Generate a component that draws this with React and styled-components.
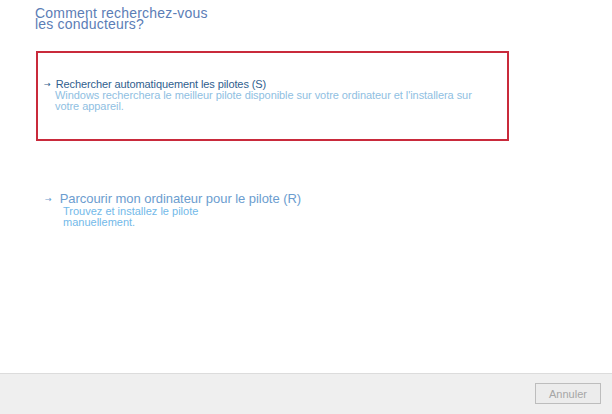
import React from "react";
import styled, { createGlobalStyle } from "styled-components";

const Global = createGlobalStyle`
  html, body { margin: 0; padding: 0; background: #ffffff; }
  body { font-family: "Liberation Sans", Arial, sans-serif; }
  #root { height: 414px; }
`;

const Page = styled.div`
  height: 414px;
  width: 612px;
  display: flex;
  flex-direction: column;
  background: #ffffff;
  overflow: hidden;
`;

const Content = styled.div`
  flex: 1;
  display: flex;
  flex-direction: column;
  padding: 7px 0 0 35px;
`;

const Title = styled.h1`
  margin: 0;
  font-size: 14px;
  letter-spacing: 0.2px;
  font-weight: normal;
  line-height: 11px;
  color: #5b7db6;
  padding-top: 1px;
`;

const Option = styled.div`
  display: flex;
  flex-direction: column;
  box-sizing: border-box;
  width: ${(p) => p.$width}px;
  height: ${(p) => p.$height}px;
  margin: ${(p) => p.$margin};
  padding: ${(p) => p.$padding};
  border: 2px solid ${(p) => (p.$selected ? "#c92a3b" : "transparent")};
  justify-content: center;
`;

const HeadRow = styled.div`
  display: flex;
  align-items: center;
  gap: ${(p) => p.$gap}px;
`;

const Arrow = styled.span`
  font-family: "DejaVu Sans", sans-serif;
  font-size: 8px;
  line-height: 1;
  padding-top: 2px;
  color: ${(p) => p.$color};
`;

const Heading = styled.span`
  font-size: ${(p) => p.$size}px;
  line-height: ${(p) => p.$lh}px;
  letter-spacing: ${(p) => p.$ls}px;
  color: ${(p) => p.$color};
`;

const Desc = styled.div`
  font-size: 11px;
  line-height: 11px;
  letter-spacing: ${(p) => p.$ls}px;
  color: ${(p) => p.$color};
  padding-left: ${(p) => p.$indent}px;
  width: ${(p) => p.$width}px;
`;

const Footer = styled.div`
  height: 41px;
  border-top: 1px solid #dcdcdc;
  background: #efefef;
  display: flex;
  justify-content: flex-end;
  align-items: flex-start;
  padding: 9px 11px 0 0;
  box-sizing: border-box;
`;

const Button = styled.button`
  width: 66px;
  height: 21px;
  box-sizing: border-box;
  border: 1px solid #bdbdbd;
  background: #ececec;
  color: #a6a6a6;
  font-family: "Liberation Sans", Arial, sans-serif;
  font-size: 11px;
  padding: 0;
`;

export default function App() {
  return (
    <Page>
      <Global />
      <Content>
        <Title>
          Comment recherchez-vous
          <br />
          les conducteurs?
        </Title>
        <Option $selected $width={473} $height={90} $margin="21px 0 0 1px" $padding="0 0 2px 6px">
          <HeadRow $gap={5}>
            <Arrow $color="#2f5e8e">→</Arrow>
            <Heading $size={11} $lh={12} $ls={-0.1} $color="#2f5e8e">
              Rechercher automatiquement les pilotes (S)
            </Heading>
          </HeadRow>
          <Desc $color="#8fc0e2" $indent={11} $width={440} $ls={-0.06}>
            Windows recherchera le meilleur pilote disponible sur votre ordinateur et l'installera sur
            votre appareil.
          </Desc>
        </Option>
        <Option $width={300} $height={60} $margin="39px 0 0 1px" $padding="0 0 0 7px">
          <HeadRow $gap={8}>
            <Arrow $color="#6c9dcf">→</Arrow>
            <Heading $size={13} $lh={14} $ls={-0.05} $color="#6c9dcf">
              Parcourir mon ordinateur pour le pilote (R)
            </Heading>
          </HeadRow>
          <Desc $color="#72b9e9" $indent={18} $width={160} $ls={0}>
            Trouvez et installez le pilote manuellement.
          </Desc>
        </Option>
      </Content>
      <Footer>
        <Button>Annuler</Button>
      </Footer>
    </Page>
  );
}
